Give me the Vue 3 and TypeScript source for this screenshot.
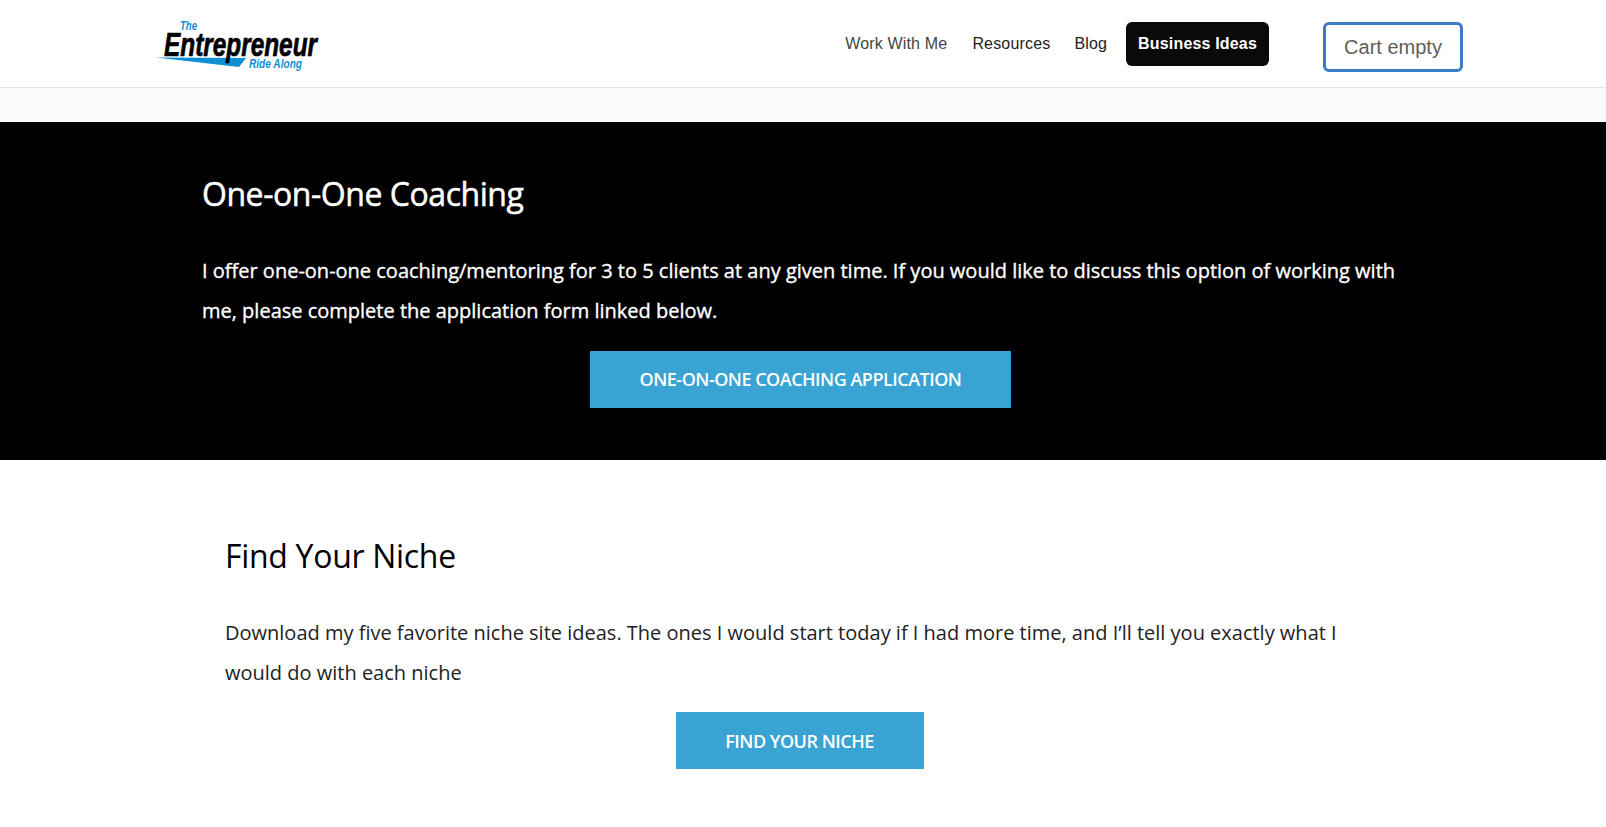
<script setup lang="ts">
const navLinks = ["Work With Me", "Resources", "Blog"];
</script>

<template>
  <div class="page">
    <header class="site-header">
      <div class="logo">
        <svg width="170" height="56" viewBox="0 0 170 56">
          <polygon points="6,41.5 96,42 89,51 80,50" fill="#0f8fd6" />
          <text class="logo-the" x="30" y="14" textLength="17" lengthAdjust="spacingAndGlyphs">The</text>
          <text class="logo-main" x="14" y="40" textLength="153" lengthAdjust="spacingAndGlyphs">Entrepreneur</text>
          <text class="logo-sub" x="99" y="52" textLength="53" lengthAdjust="spacingAndGlyphs">Ride Along</text>
        </svg>
      </div>
      <nav class="main-nav">
        <a v-for="(link, i) in navLinks" :key="link" class="nav-link" :class="{ first: i === 0 }">{{ link }}</a>
        <a class="nav-cta">Business Ideas</a>
      </nav>
      <button class="cart-btn">Cart empty</button>
    </header>

    <div class="header-gap"></div>

    <section class="coaching">
      <h2>One-on-One Coaching</h2>
      <p>I offer one-on-one coaching/mentoring for 3 to 5 clients at any given time. If you would like to discuss this option of working with me, please complete the application form linked below.</p>
      <div class="btn-row">
        <a class="cta coaching-cta">ONE-ON-ONE COACHING APPLICATION</a>
      </div>
    </section>

    <section class="niche">
      <h2>Find Your Niche</h2>
      <p>Download my five favorite niche site ideas. The ones I would start today if I had more time, and I’ll tell you exactly what I would do with each niche</p>
      <div class="btn-row">
        <a class="cta niche-cta">FIND YOUR NICHE</a>
      </div>
    </section>
  </div>
</template>

<style scoped>
.page {
  height: 827px;
  overflow: hidden;
  background: #fff;
  font-family: "Open Sans", "Noto Sans", sans-serif;
}

.site-header {
  display: flex;
  align-items: center;
  height: 87px;
  padding: 0 143px 0 150px;
  background: #fff;
  border-bottom: 1px solid #e8e8e8;
}

.logo {
  display: flex;
  margin-top: 1px;
}

.logo-the,
.logo-sub,
.logo-main {
  font-family: "Liberation Sans", Arial, sans-serif;
  font-weight: 700;
  font-style: italic;
}

.logo-the {
  font-size: 12.5px;
  fill: #0f8fd6;
}

.logo-main {
  font-size: 33px;
  fill: #000;
  stroke: #000;
  stroke-width: 0.7px;
}

.logo-sub {
  font-size: 12px;
  fill: #0f8fd6;
}

.main-nav {
  display: flex;
  align-items: center;
  margin-left: auto;
  font-family: "Liberation Sans", Arial, sans-serif;
  font-size: 16px;
  letter-spacing: 0.17px;
}

.nav-link {
  margin-right: 18px;
  margin-left: 6px;
  color: #222;
}

.nav-link.first {
  margin-right: 19px;
  color: #444;
}

.nav-cta {
  display: flex;
  align-items: center;
  height: 44px;
  margin-left: 1px;
  padding: 0 12px;
  background: #0a0a0a;
  border-radius: 6px;
  color: #fff;
  font-weight: 700;
}

.cart-btn {
  width: 140px;
  height: 50px;
  margin-left: 54px;
  margin-top: 7px;
  padding: 0;
  background: #fff;
  border: 3px solid #3a7dc4;
  border-radius: 6px;
  color: #5e5e5e;
  font-family: "Liberation Sans", Arial, sans-serif;
  font-size: 20px;
}

.header-gap {
  height: 34px;
  background: #fafafa;
}

.coaching {
  height: 338px;
  padding: 50px 207px 0 202px;
  box-sizing: border-box;
  background: #000;
  color: #fff;
}

.niche {
  padding: 74px 232px 0 225px;
  color: #000;
}

h2 {
  margin: 0;
  font-size: 32px;
  font-weight: 400;
  line-height: 44px;
  letter-spacing: -0.3px;
}

.coaching h2 {
  letter-spacing: -0.45px;
  -webkit-text-stroke: 0.5px #fff;
}

p {
  margin: 35px 0 0;
  font-size: 20px;
  line-height: 40px;
}

.coaching p {
  -webkit-text-stroke: 0.35px #fff;
}

.niche p {
  color: #222;
}

.btn-row {
  display: flex;
  justify-content: center;
  margin-top: 19px;
}

.coaching .btn-row {
  margin-top: 20px;
}

.cta {
  display: flex;
  align-items: center;
  justify-content: center;
  height: 57px;
  background: #39a3d3;
  color: #fff;
  font-size: 18px;
  font-weight: 600;
  letter-spacing: -0.5px;
}

.coaching-cta {
  width: 421px;
  padding-bottom: 2px;
  box-sizing: border-box;
}

.niche-cta {
  width: 248px;
}
</style>

<style>
html,
body {
  margin: 0;
  background: #fff;
}
</style>
